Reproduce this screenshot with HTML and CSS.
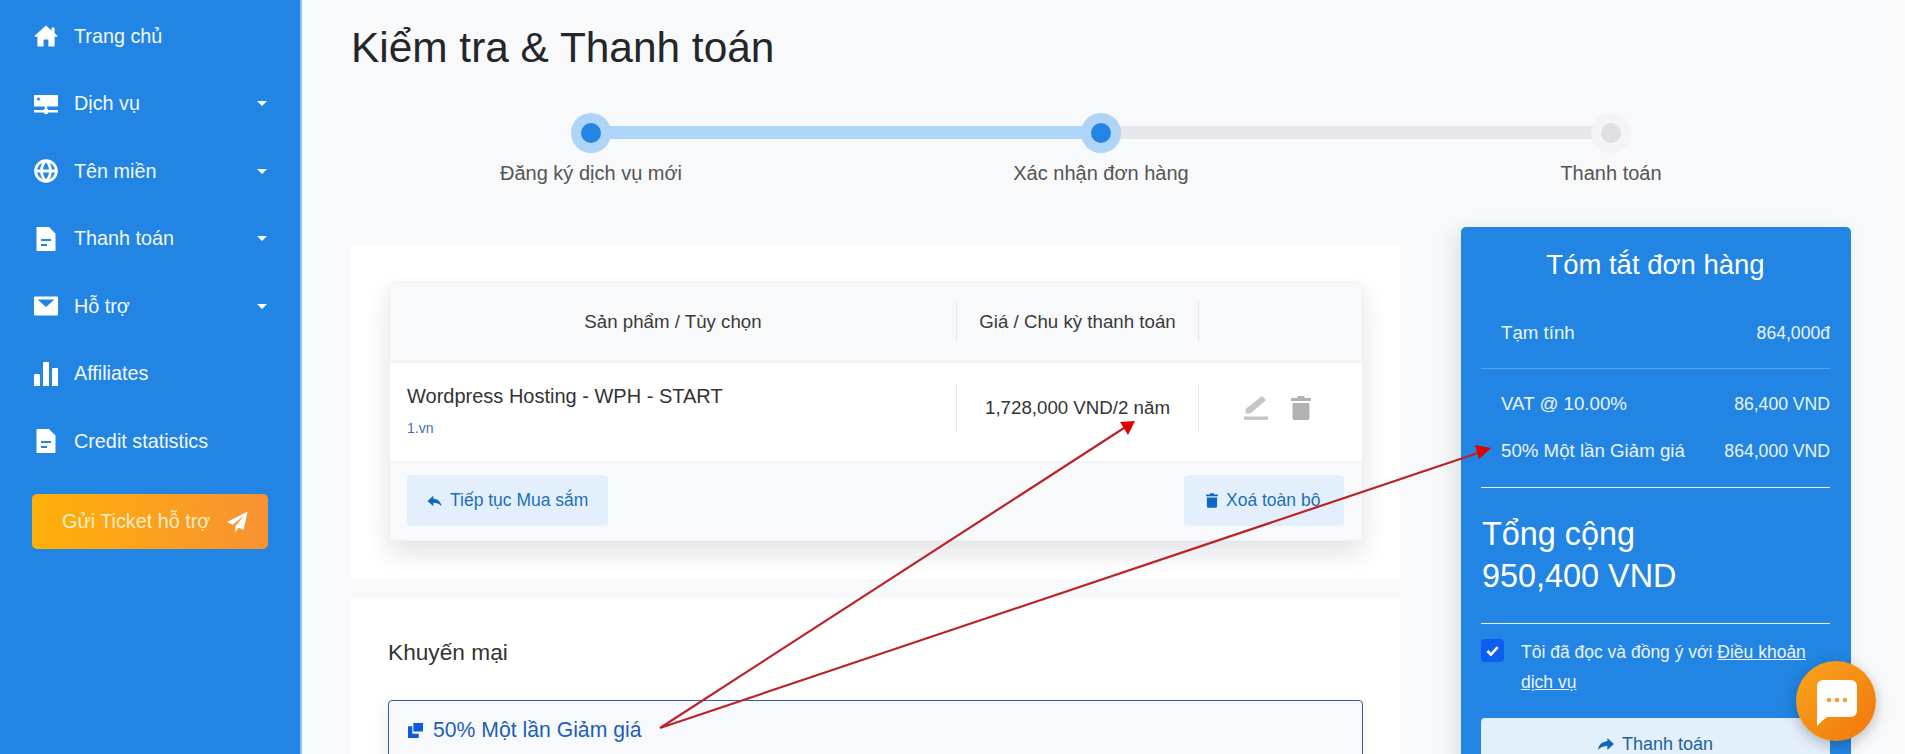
FILE: index.html
```html
<!DOCTYPE html>
<html lang="vi">
<head>
<meta charset="utf-8">
<title>Kiểm tra &amp; Thanh toán</title>
<link rel="stylesheet" href="styles.css">
</head>
<body>
<div class="page">
  <aside class="sidebar">
    <nav class="nav">
      <a class="nav-item"><svg class="nav-icon" viewBox="0 0 24 24"><path d="M12 1.500 0.800 11.600c-.5.500-.2 1.200.5 1.200H3.400v8.600c0 .6.400 1 1 1H9.600v-7h4.800v7h5.200c.6 0 1-.4 1-1v-8.600h2.100c.7 0 1-.7.500-1.200l-2.600-2.400V3.500h-3v3z"/></svg><span>Trang chủ</span></a>
      <a class="nav-item"><svg class="nav-icon" viewBox="0 0 24 24"><path fill-rule="evenodd" d="M1 3h22a1 1 0 0 1 1 1v10.500H0V4a1 1 0 0 1 1-1zm3.500 2.500a1.500 1.500 0 1 0 0 3 1.500 1.500 0 0 0 0-3zM0 18h9.600a2.500 2.500 0 0 1 4.800 0H24v2.400H14.400a2.500 2.500 0 0 1-4.800 0H0zM10.800 14.500h2.400v2h-2.400z"/></svg><span>Dịch vụ</span><i class="caret"></i></a>
      <a class="nav-item"><svg class="nav-icon" viewBox="0 0 24 24"><g fill="none" stroke="#fff" stroke-width="2.800"><circle cx="12" cy="12" r="10.400"/><path d="M1.600 12h20.800M12 1.600c-6 6-6 14.800 0 20.800M12 1.600c6 6 6 14.800 0 20.800"/></g></svg><span>Tên miền</span><i class="caret"></i></a>
      <a class="nav-item"><svg class="nav-icon" viewBox="0 0 24 24"><path fill-rule="evenodd" d="M3.500 0H15l6.500 6.500V23a1 1 0 0 1-1 1H3.500a1 1 0 0 1-1-1V1a1 1 0 0 1 1-1zM7 12v2h10v-2zm0 5v2h6v-2z"/></svg><span>Thanh toán</span><i class="caret"></i></a>
      <a class="nav-item"><svg class="nav-icon" viewBox="0 0 24 24"><path fill-rule="evenodd" d="M1 2.500h22a1 1 0 0 1 1 1v17a1 1 0 0 1-1 1H1a1 1 0 0 1-1-1v-17a1 1 0 0 1 1-1zM3.500 5.500 12 13l8.500-7.500z"/></svg><span>Hỗ trợ</span><i class="caret"></i></a>
      <a class="nav-item"><svg class="nav-icon" viewBox="0 0 24 24"><path d="M0 13a1 1 0 0 1 1-1h4a1 1 0 0 1 1 1v11H0zM9 1a1 1 0 0 1 1-1h4a1 1 0 0 1 1 1v23H9zM18 7a1 1 0 0 1 1-1h4a1 1 0 0 1 1 1v17h-6z"/></svg><span>Affiliates</span></a>
      <a class="nav-item"><svg class="nav-icon" viewBox="0 0 24 24"><path fill-rule="evenodd" d="M3.500 0H15l6.500 6.500V23a1 1 0 0 1-1 1H3.500a1 1 0 0 1-1-1V1a1 1 0 0 1 1-1zM7 12v2h10v-2zm0 5v2h6v-2z"/></svg><span>Credit statistics</span></a>
    </nav>
    <a class="ticket-btn"><span>Gửi Ticket hỗ trợ</span><svg class="plane" viewBox="0 0 24 24"><path d="M23.500.5 0 12.500l6.500 3.300L19.500 5 9.500 17.300V24l4-5 5.500 2.800z"/></svg></a>
  </aside>

  <main class="main">
    <h1 class="title">Kiểm tra &amp; Thanh toán</h1>
    <ol class="stepper">
      <li class="step done"><span class="dot"></span><span class="step-label">Đăng ký dịch vụ mới</span></li>
      <li class="step current"><span class="dot"></span><span class="step-label">Xác nhận đơn hàng</span></li>
      <li class="step pending"><span class="dot"></span><span class="step-label">Thanh toán</span></li>
    </ol>
    <div class="columns">
      <div class="left">
        <section class="card card-cart">
          <div class="cart">
            <div class="cart-head">
              <div class="cell">Sản phẩm / Tùy chọn</div>
              <div class="cell sep">Giá / Chu kỳ thanh toán</div>
              <div class="cell sep"></div>
            </div>
            <div class="cart-row">
              <div class="cell-product">
                <div class="product-name">Wordpress Hosting - WPH - START</div>
                <a class="product-domain">1.vn</a>
              </div>
              <div class="cell sep">1,728,000 VND/2 năm</div>
              <div class="cell sep actions">
                <svg class="act act-edit" viewBox="0 0 24 24"><path d="M18 0l4 4L6.500 17.500H1.500V13zM0 20.500h24V24H0z"/></svg>
                <svg class="act act-trash" viewBox="0 0 20 24"><path d="M7 0h6l1 2h5c.6 0 1 .4 1 1v2H0V3c0-.6.4-1 1-1h5zM1.500 7h17v15c0 1.100-.9 2-2 2h-13c-1.100 0-2-.9-2-2z"/></svg>
              </div>
            </div>
            <div class="cart-foot">
              <a class="soft-btn btn-continue"><svg class="btn-ico" viewBox="0 0 24 24"><path d="M10 3 0 12l10 9v-6c6 0 10 1.500 14 6-1-7-5-12-14-13z"/></svg>Tiếp tục Mua sắm</a>
              <a class="soft-btn btn-clear"><svg class="btn-ico" viewBox="0 0 20 24"><path d="M7 0h6l1 2h5c.6 0 1 .4 1 1v2H0V3c0-.6.4-1 1-1h5zM1.500 7h17v15c0 1.100-.9 2-2 2h-13c-1.100 0-2-.9-2-2z"/></svg>Xoá toàn bộ</a>
            </div>
          </div>
        </section>
        <section class="card card-promo">
          <h2 class="promo-title">Khuyến mại</h2>
          <div class="promo-box">
            <svg class="promo-ico" viewBox="0 0 14 14"><path d="M0 3h4v7h6v4H0zM5 0h9v8H5z"/></svg><span>50% Một lần Giảm giá</span>
          </div>
        </section>
      </div>
      <aside class="summary">
        <h2 class="summary-title">Tóm tắt đơn hàng</h2>
        <div class="sum-group sum-first">
          <div class="sum-row"><span class="sum-label">Tạm tính</span><span>864,000đ</span></div>
        </div>
        <div class="sum-group sum-second">
          <div class="sum-row"><span class="sum-label">VAT @ 10.00%</span><span>86,400 VND</span></div>
          <div class="sum-row"><span class="sum-label">50% Một lần Giảm giá</span><span>864,000 VND</span></div>
        </div>
        <div class="sum-total"><div>Tổng cộng</div><div>950,400 VND</div></div>
        <div class="terms">
          <span class="checkbox"><svg viewBox="0 0 16 16"><path d="M2.500 8.500 6.300 12.300 13.500 4.300" fill="none" stroke="#fff" stroke-width="2.800"/></svg></span>
          <div class="terms-text">
            <div>Tôi đã đọc và đồng ý với <a class="terms-link">Điều khoản</a></div>
            <div><a class="terms-link">dịch vụ</a></div>
          </div>
        </div>
        <a class="pay-btn"><svg class="pay-ico" viewBox="0 0 24 24"><path d="M14 3l10 9-10 9v-6C8 15 4 16.500 0 21c1-7 5-12 14-13z"/></svg>Thanh toán</a>
      </aside>
    </div>
  </main>
  <div class="edge"></div>
</div>

<svg class="arrows" viewBox="0 0 1905 754">
  <g stroke="#bb2329" stroke-width="2.200" fill="none"><path d="M660 728 1124 428M660 728 1478 453"/></g>
  <path class="head" d="M1135 421 1120 422 1128 435z"/>
  <path class="head" d="M1491 448 1475 445 1479 459z"/>
</svg>

<div class="chat">
  <svg viewBox="0 0 40 46"><path d="M6 0h28a6 6 0 0 1 6 6v25a6 6 0 0 1-6 6H10c-4 3-7 6-10 9V6a6 6 0 0 1 6-6z" fill="#fff"/><g fill="#f0a040"><circle cx="12" cy="20" r="2.300"/><circle cx="20" cy="20" r="2.300"/><circle cx="28" cy="20" r="2.300"/></g></svg>
</div>
</body>
</html>
```

FILE: styles.css
```css
* { box-sizing: border-box; }
html, body { margin: 0; height: 754px; overflow: hidden; }
body { font-family: "Liberation Sans", Arial, sans-serif; background: #f8f9fa; color: #333; position: relative; }
a { text-decoration: none; color: inherit; }

.page { display: flex; height: 754px; overflow: hidden; }

/* Sidebar */
.sidebar { flex: 0 0 302px; background: #2285e3; border-right: 2px solid #8fc3f2; padding-top: 2.500px; color: #fff; }
.nav { display: flex; flex-direction: column; }
.nav-item { display: flex; align-items: center; height: 67.500px; padding: 0 33px 0 34px; font-size: 19.800px; color: #f2f8fe; }
.nav-item span { flex: 1; margin-left: 16px; }
.nav-icon { width: 24px; height: 24px; fill: #fff; flex: none; }
.caret { width: 0; height: 0; border: 5px solid transparent; border-top: 5px solid #fff; border-bottom: 0; }
.ticket-btn { display: flex; align-items: center; justify-content: space-between; width: 236px; height: 55px; margin: 18.500px 0 0 32px; padding: 0 20px 0 30px; border-radius: 5px; background: linear-gradient(90deg, #ffb007, #f89233); color: #ffedc9; font-size: 19.800px; }
.plane { width: 21px; height: 21px; fill: #fff; }

/* Main */
.main { flex: 1; min-width: 0; padding-left: 49px; }
.edge { flex: 0 0 8px; background: #fbfbfb; }
.title { margin: 0; padding-top: 24px; height: 95px; font-size: 42.400px; line-height: 48px; font-weight: 400; color: #23272b; }

.stepper { list-style: none; margin: 18px 0 42px -15px; padding: 0; display: grid; grid-template-columns: repeat(3, 510px); }
.step { position: relative; display: flex; flex-direction: column; align-items: center; }
.dot { position: relative; z-index: 1; width: 40px; height: 40px; border-radius: 50%; background: #aed4f8; display: flex; align-items: center; justify-content: center; }
.dot::after { content: ""; width: 20px; height: 20px; border-radius: 50%; background: #2285e3; }
.step-label { margin-top: 8px; font-size: 20px; line-height: 24px; color: #555; }
.step.done::before, .step.current::before { content: ""; position: absolute; left: 50%; top: 13px; width: 100%; height: 13px; }
.step.done::before { background: #aed4f8; }
.step.current::before { background: #e7e7ed; }
.pending .dot { background: #f4f4f6; }
.pending .dot::after { background: #dfdfe2; }

.columns { display: grid; grid-template-columns: 1049px 390px; column-gap: 61px; align-items: start; }
.left { padding-top: 18px; }

/* Cards */
.card { background: #fff; }
.card-cart { height: 334px; padding: 37px 37px 0 38px; }
.card-promo { margin-top: 19px; padding: 39px 37px 0 37px; height: 200px; }

.cart { height: 259px; border-radius: 6px; box-shadow: 0 12px 26px rgba(40, 50, 70, .14); background: #fff; overflow: hidden; border: 1px solid #f0f0f2; }
.cart-head, .cart-row { display: grid; grid-template-columns: 566px 242px 1fr; align-items: center; }
.cart-head { height: 80px; background: #f8f9fa; border-bottom: 2px solid #f0f1f3; }
.cart-row { height: 100px; border-bottom: 2px solid #f3f3f5; }
.cell { text-align: center; font-size: 18.700px; color: #3a3a3a; }
.cart-head .cell { height: 40px; line-height: 40px; }
.cart-row .cell { height: 50px; line-height: 50px; margin-bottom: 8px; font-size: 18.700px; color: #333; }
.sep { border-left: 1px solid #e8e8ea; }
.cell-product { padding-left: 17px; margin-bottom: 4px; }
.product-name { font-size: 20px; line-height: 24px; color: #333; }
.product-domain { display: block; margin-top: 12px; font-size: 14px; line-height: 16px; color: #3f6fb5; }
.actions { display: flex; align-items: center; gap: 23px; padding-left: 45px; }
.act { height: 24px; }
.act-edit { width: 24px; fill: #c6c6c6; }
.act-trash { width: 20px; fill: #b2b2b2; }
.cart-foot { display: flex; justify-content: space-between; align-items: flex-start; padding: 12px 18px 0 17px; background: #f8f9fa; height: 78px; }
.soft-btn { display: flex; align-items: center; height: 51px; background: #e3effb; border-radius: 4px; color: #1f6fb8; font-size: 17.500px; }
.btn-continue { width: 201px; padding-left: 20px; }
.btn-clear { width: 160px; padding-left: 22px; }
.btn-ico { width: 15px; height: 14px; fill: #1268b8; margin-right: 8px; }
.btn-clear .btn-ico { width: 12px; height: 15px; fill: #0f66c4; }

.promo-title { margin: 0; font-size: 22.700px; line-height: 30px; font-weight: 400; color: #333; }
.promo-box { display: flex; align-items: center; gap: 10px; height: 120px; margin-top: 33px; padding: 0 0 60px 19px; background: #f8f9fc; border: 1px solid #2a5f9e; border-radius: 4px; color: #1f5fb4; font-size: 21.200px; box-shadow: -4px 6px 14px rgba(40, 50, 70, .08); }
.promo-ico { width: 15px; height: 15px; fill: #0f5be0; }

/* Summary */
.summary { height: 540px; padding: 20px 21px 0 20px; background: #2285e3; border-radius: 5px; color: #fff; box-shadow: -6px 6px 20px rgba(40, 50, 70, .12); }
.summary-title { margin: 0; padding-top: 1px; font-size: 27.500px; line-height: 33px; font-weight: 400; text-align: center; }
.sum-group { padding-left: 20px; }
.sum-first { margin-top: 40px; padding-bottom: 23px; border-bottom: 1px solid #58a5ec; }
.sum-second { padding-top: 23px; padding-bottom: 24px; border-bottom: 1px solid #e4f1fc; display: flex; flex-direction: column; gap: 23px; }
.sum-row { display: flex; justify-content: space-between; font-size: 17.600px; line-height: 24px; color: #eaf4fd; }
.sum-label { font-size: 18.700px; }
.sum-total { padding: 25px 0 26px 1px; border-bottom: 1px solid #e4f1fc; font-size: 32.400px; line-height: 42px; }
.terms { display: flex; gap: 17px; margin-top: 13px; }
.checkbox { flex: none; width: 23px; height: 23px; margin-top: 2px; border-radius: 4px; background: #0d5ef0; display: flex; align-items: center; justify-content: center; }
.checkbox svg { width: 15px; height: 15px; }
.terms-text { font-size: 17.500px; line-height: 30px; color: #eaf4fd; }
.terms-link { text-decoration: underline; }
.pay-btn { display: flex; align-items: center; justify-content: center; height: 60px; margin-top: 21px; padding-bottom: 8px; background: #e3effb; border-radius: 4px; color: #1f5f9f; font-size: 18px; }
.pay-ico { width: 16px; height: 16px; margin-right: 8px; fill: #1268b8; }

/* Overlays */
.arrows { position: absolute; left: 0; top: 0; width: 1905px; height: 754px; pointer-events: none; }
.head { fill: #e00000; }
.chat { position: absolute; left: 1796px; top: 661px; width: 80px; height: 80px; border-radius: 50%; background: linear-gradient(135deg, #f9a51c, #f2760b); box-shadow: 0 4px 14px rgba(0, 0, 0, .25); display: flex; align-items: center; justify-content: center; padding: 3px 0 0 1px; }
.chat svg { width: 40px; height: 46px; }
```
